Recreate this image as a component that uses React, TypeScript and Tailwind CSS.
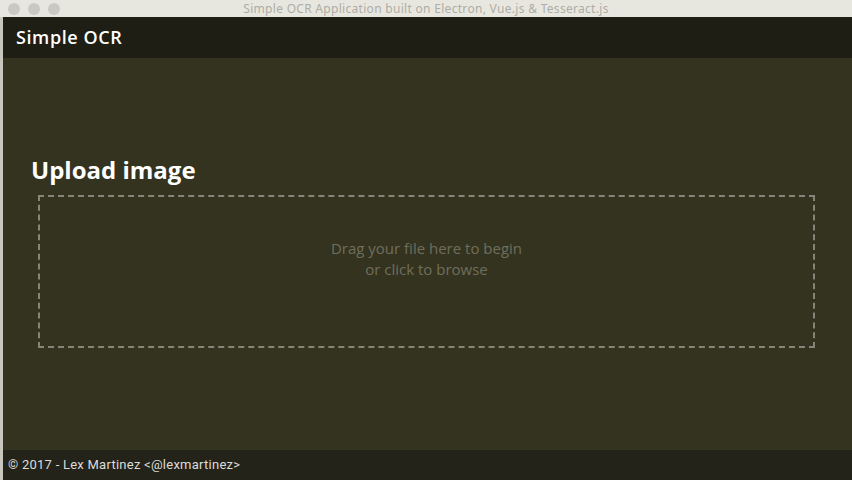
export default function App() {
  return (
    <div className="w-[852px] h-[480px] flex flex-col overflow-hidden bg-[#34331f]" style={{ fontFamily: 'Roboto, "Noto Sans", sans-serif' }}>
      <div className="h-[17px] shrink-0 bg-[#e8e7df] relative flex items-center justify-center">
        <div className="absolute left-[8px] top-[3px] flex gap-[8px]">
          <div className="w-[12px] h-[12px] rounded-full bg-[#c9c8c2]" />
          <div className="w-[12px] h-[12px] rounded-full bg-[#c9c8c2]" />
          <div className="w-[12px] h-[12px] rounded-full bg-[#c9c8c2]" />
        </div>
        <span className="text-[12px] leading-none text-[#aeada5] tracking-[0.3px]" style={{ fontFamily: '"Noto Sans", sans-serif' }}>
          Simple OCR Application built on Electron, Vue.js &amp; Tesseract.js
        </span>
      </div>
      <div className="flex-1 flex">
        <div className="w-[3px] bg-[#c8c7bd]" />
        <div className="flex-1 flex flex-col">
          <div className="h-[41px] shrink-0 bg-[#1f1e15] flex items-center pl-[13px]">
            <span className="text-[18px] font-semibold text-white tracking-[0.6px]" style={{ fontFamily: '"Open Sans", sans-serif' }}>Simple OCR</span>
          </div>
          <div className="flex-1 bg-[#34331f] pt-[97px] px-[28px]">
            <h1 className="text-[24px] leading-[30px] font-bold text-white" style={{ fontFamily: '"Open Sans", sans-serif' }}>Upload image</h1>
            <div className="mt-[10px] ml-[7px] mr-[9px] h-[153px] border-2 border-dashed border-[#86857a] flex flex-col items-center pt-[41px] text-[15px] leading-[21px] text-[#6f6e5c]" style={{ fontFamily: '"Open Sans", sans-serif' }}>
              <span>Drag your file here to begin</span>
              <span>or click to browse</span>
            </div>
          </div>
          <div className="h-[30px] shrink-0 bg-[#24231a] flex items-center pl-[5px]">
            <span className="text-[13px] text-[#dcdcd8] tracking-[0.25px]">© 2017 - Lex Martinez &lt;@lexmartinez&gt;</span>
          </div>
        </div>
      </div>
    </div>
  );
}
